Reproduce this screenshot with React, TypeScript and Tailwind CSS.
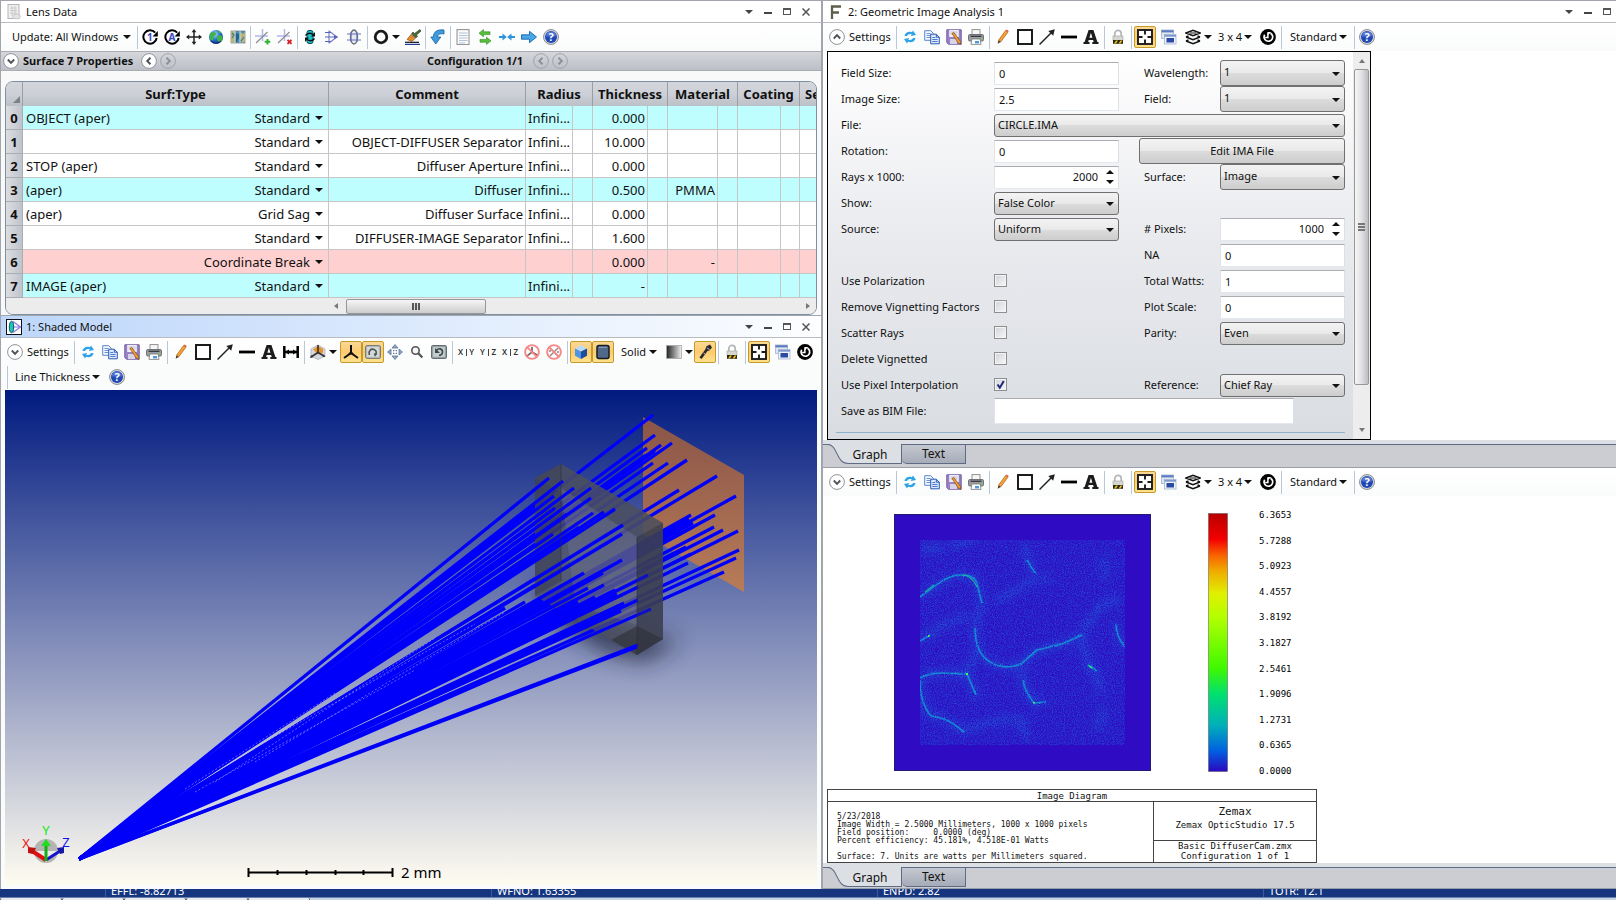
import React, { ReactNode } from "react";

/* ---------- small shared pieces ---------- */

function DropArrow({ className = "" }: { className?: string }) {
  return (
    <svg viewBox="0 0 8 4" className={`h-[4px] w-[8px] shrink-0 ${className}`} aria-hidden="true">
      <path d="M0 0h8L4 4z" fill="#111" />
    </svg>
  );
}

function Sep({ tight = false }: { tight?: boolean }) {
  return <span className={`${tight ? "mx-px" : "mx-[2px]"} h-[23px] w-px shrink-0 bg-[#b9c7d8]`} />;
}

function Tool({ label, active = false, children }: { label: string; active?: boolean; children: ReactNode }) {
  const base = "flex h-[22px] w-[22px] shrink-0 items-center justify-center";
  return (
    <button
      type="button"
      aria-label={label}
      className={
        active
          ? `${base} rounded-[2px] border border-[#c29b29] bg-gradient-to-b from-[#fbd896] via-[#fdcb70] to-[#fee08c]`
          : base
      }
    >
      {children}
    </button>
  );
}

function MenuButton({ children, className = "" }: { children: ReactNode; className?: string }) {
  return (
    <button
      type="button"
      aria-haspopup="menu"
      className={`flex h-[22px] shrink-0 items-center justify-between whitespace-nowrap ${className}`}
    >
      <span>{children}</span>
      <DropArrow className="w-[6px]" />
    </button>
  );
}

function Svg({ size = 16, children }: { size?: number; children: ReactNode }) {
  return (
    <svg viewBox="0 0 16 16" width={size} height={size} className="shrink-0" aria-hidden="true">
      {children}
    </svg>
  );
}

/* ---------- icons ---------- */

const CircleArrow = ({ letter }: { letter: string }) => (
  <Svg>
    <path d="M13.2 3.6A6.7 6.7 0 1 0 14.7 9" fill="none" stroke="#000" strokeWidth="2" />
    <path d="M15.8 2v5.4h-5.2z" fill="#000" />
    <text x="7.9" y="11.6" fontSize="10" fontWeight="700" textAnchor="middle" fill="#3a48c0" fontFamily="Noto Sans, sans-serif">
      {letter}
    </text>
  </Svg>
);
const MoveCross = () => (
  <Svg>
    <path d="M8 2v12M2 8h12" stroke="#222" strokeWidth="1.500" />
    <path d="M8 0l2.400 3.200H5.600zM8 16l2.400-3.200H5.600zM0 8l3.200-2.400v4.800zM16 8l-3.200-2.400v4.800z" fill="#222" />
  </Svg>
);
const Globe = () => (
  <Svg>
    <defs>
      <radialGradient id="globe" cx="0.4" cy="0.3" r="0.8">
        <stop offset="0" stopColor="#bfe0ff" />
        <stop offset="0.45" stopColor="#2b78d8" />
        <stop offset="1" stopColor="#0b2a7c" />
      </radialGradient>
    </defs>
    <circle cx="8" cy="8" r="7" fill="url(#globe)" />
    <path d="M2.500 4.500C5 1.800 8 3 8 5S5 7 5.500 9 4 12 3 11.500 1 6.500 2.500 4.500zM9.500 7c2-1.500 4-1 5 1s-1 5-3 5-3.500-4.500-2-6zM9 1.500c2 0 3.500 1.200 4.200 2.500L11 4z" fill="#3db34a" />
    <path d="M3 12c3 2.500 7 2.500 10 0" stroke="#0a1f50" strokeWidth="1.200" fill="none" opacity=".6" />
  </Svg>
);
const MapIcon = () => (
  <Svg>
    <rect x="1" y="2" width="14" height="12" fill="#4f93b5" stroke="#6a7a80" strokeWidth=".7" />
    <path d="M1 2h4v12H1zM10 3l3 2 2-2v10l-3 1-2-4z" fill="#b9b27a" />
    <path d="M6 4l3 1v4l-2 4H6z" fill="#22648f" />
    <path d="M5 2v12M10 2v12" stroke="#dfe7e2" strokeWidth=".8" />
    <path d="M2 4l2 2-2 3M11 12l3-4" stroke="#3f7a8c" strokeWidth="1.200" fill="none" />
  </Svg>
);
const AxisEdit = ({ add }: { add: boolean }) => (
  <Svg>
    <path d="M7.500 0v12M0 7h13" stroke="#b4b6ee" strokeWidth="1.500" />
    <path d="M1 14L12.500 3" stroke="#8a8a8a" strokeWidth="1.100" />
    {add ? (
      <path d="M12.500 10v5.600M9.700 12.800h5.600" stroke="#2fb335" strokeWidth="2" />
    ) : (
      <path d="M10.500 10.800l4 4M14.500 10.800l-4 4" stroke="#d42020" strokeWidth="1.900" />
    )}
  </Svg>
);
const LensTeal = () => (
  <Svg>
    <rect x="5" y="1.500" width="6" height="13" rx="2" fill="#18c2c9" stroke="#0a4a50" />
    <path d="M3.500 6.500c2-2.500 5-2.800 7.500-1M12.500 9.500c-2 2.500-5 2.800-7.500 1" fill="none" stroke="#111" strokeWidth="1.500" />
    <path d="M13 3v4.500H9zM3 13V8.500h4z" fill="#111" />
  </Svg>
);
const LensRay = () => (
  <Svg>
    <path d="M5 1.500v13M5 2l8 6-8 6" fill="none" stroke="#7a83c8" strokeWidth="1.200" />
    <path d="M1 3.500h6M1 12.500h6M1 8h12" stroke="#5662b8" strokeWidth="1.200" />
    <path d="M14 8l-4-2v4z" fill="#5662b8" />
  </Svg>
);
const LensFrame = () => (
  <Svg>
    <ellipse cx="8" cy="8" rx="3.500" ry="7" fill="#e8eaf2" stroke="#6b7078" strokeWidth="1.400" />
    <path d="M1 5h14M1 11h14M5 3v10M11 3v10" stroke="#6570b4" strokeWidth="1" />
  </Svg>
);
const Ring = () => (
  <Svg>
    <circle cx="8" cy="8" r="5.800" fill="none" stroke="#1a1a1a" strokeWidth="2.800" />
  </Svg>
);
const Brush = () => (
  <Svg>
    <path d="M15 .5L9.500 4.500 8 3 6.500 5l4 4 2-1.500L11.500 6 16 2z" fill="#4d6b3a" stroke="#24361a" strokeWidth=".6" />
    <path d="M6 5.500l4 4L7 12.500l-5-2z" fill="#e88b2a" stroke="#7c3d0b" strokeWidth=".6" />
    <path d="M0 13.300h14" stroke="#111" strokeWidth="1.200" />
    <path d="M0 15.400h15" stroke="#1d3a9c" strokeWidth="1.200" />
  </Svg>
);
const Undo = () => (
  <Svg>
    <path d="M14 1C7 0 3.500 3 3.300 8H.8l5 7 5-7H7.500C7.600 5.500 10 4.300 14 5z" fill="#3c9bdc" stroke="#1c5fa0" strokeWidth=".8" />
  </Svg>
);
const ListIcon = () => (
  <Svg>
    <rect x="2" y=".6" width="12" height="15" fill="#fafafa" stroke="#8c8c8c" />
    <path d="M4 4h8.500M4 6.500h8.500M4 9h8.500M4 11.500h8.500M4 14h6" stroke="#a9bcd8" strokeWidth=".9" />
  </Svg>
);
const Swap = () => (
  <Svg>
    <path d="M2 4.200L6.500.6v2.200H13v2.800H6.500v2.200zM14 11.800L9.500 8.200v2.200H3v2.800h6.500v2.200z" fill="#56bf3c" stroke="#2f8a20" strokeWidth=".6" />
  </Svg>
);
const Inward = () => (
  <Svg>
    <path d="M0 7h3.500V4.500L7.800 8l-4.300 3.500V9H0zM16 7h-3.500V4.500L8.200 8l4.300 3.500V9H16z" fill="#2f93dc" />
  </Svg>
);
const ArrowRight = () => (
  <Svg>
    <path d="M.5 5.800h8V2.300L15.500 8l-7 5.700v-3.500h-8z" fill="#49a7e8" stroke="#1766b0" strokeWidth=".9" />
  </Svg>
);
const Help = () => (
  <Svg>
    <circle cx="8" cy="8" r="7.500" fill="#d4d6da" stroke="#84878c" strokeWidth=".9" />
    <circle cx="8" cy="8" r="6" fill="#1f48b4" />
    <path d="M2.600 7a5.500 5.500 0 0 1 10.800 0c-3 1.200-8 1.200-10.800 0z" fill="#5e83de" opacity=".7" />
    <text x="8" y="12" fontSize="11" fontWeight="700" textAnchor="middle" fill="#fff" fontFamily="Noto Sans, sans-serif">
      ?
    </text>
  </Svg>
);
const Refresh = () => (
  <Svg>
    <path d="M2.500 7C3 3.500 6.500 1.800 10 3.200L11 1.500 14 6l-5.300.9 1-1.700C7.500 4.500 5.500 5.500 5 7zM13.500 9c-.5 3.500-4 5.200-7.500 3.800L5 14.500 2 10l5.300-.9-1 1.700c2.200.7 4.200-.3 4.700-1.800z" fill="#2ea3e6" />
  </Svg>
);
const Copy = () => (
  <Svg>
    <path d="M.7 1.700h6l2.600 2.600v7H.7z" fill="#f4f8ff" stroke="#5a86cf" />
    <path d="M2.500 4.500h4M2.500 6.500h5M2.500 8.500h5" stroke="#5a86cf" strokeWidth=".9" />
    <path d="M6.700 5.200h5.600l3 3v6.600H6.700z" fill="#dfeafc" stroke="#2a5bb4" />
    <path d="M12.300 5.200v3h3" fill="none" stroke="#2a5bb4" />
    <path d="M8.300 8.500h3M8.300 10.500h5.300M8.300 12.500h5.300" stroke="#3c6cc2" strokeWidth=".9" />
  </Svg>
);
const Save = () => (
  <Svg>
    <path d="M.8.8h14.400v14.400H2.500L.8 13.500z" fill="#9a82c6" stroke="#6f5ba0" />
    <rect x="3.200" y="1" width="9.600" height="7" fill="#f1eff6" />
    <path d="M4.500 3h7M4.500 5h7" stroke="#b5b0c4" strokeWidth=".8" />
    <rect x="4" y="10" width="7" height="5" fill="#d8d3e6" />
    <path d="M6 4.500l1.800-1 6.700 9 .3 3-2.600-1.600z" fill="#f0a030" stroke="#7d4a10" strokeWidth=".7" />
  </Svg>
);
const Print = () => (
  <Svg>
    <rect x="4" y=".6" width="8" height="6" fill="#f7f7f7" stroke="#888" strokeWidth=".9" />
    <rect x=".5" y="5.500" width="15" height="6.500" rx="1.300" fill="#9a9da2" stroke="#66696d" strokeWidth=".9" />
    <path d="M2.500 7.300h11" stroke="#3a3c40" strokeWidth="1.400" />
    <path d="M3.800 10h8.400l.8 5.400H3z" fill="#fff" stroke="#777" strokeWidth=".8" />
    <rect x="7" y="12" width="4" height="2.400" fill="#4b9bdc" />
    <circle cx="13.500" cy="9.800" r=".8" fill="#5ce04a" />
  </Svg>
);
const Pencil = () => (
  <Svg>
    <path d="M3.500 11.300L10.600 1.500l2.300 1.700-7.200 9.700z" fill="#f6a23c" stroke="#b06a1a" strokeWidth=".8" />
    <path d="M10.600 1.500l1-1.100 2.200 1.700-.9 1.100z" fill="#e25a4a" />
    <path d="M3.500 11.300l-.9 3.500 3.100-1.900z" fill="#4a3420" />
  </Svg>
);
const RectIcon = () => (
  <Svg>
    <rect x="1" y="1" width="14" height="14" fill="#fff" stroke="#111" strokeWidth="1.900" />
  </Svg>
);
const ArrowDiag = () => (
  <Svg>
    <path d="M.5 15.500L12 4" stroke="#222" strokeWidth="1.500" />
    <path d="M15.800.3l-1.600 6.500-4.900-4.900z" fill="#222" />
  </Svg>
);
const LineIcon = () => (
  <Svg>
    <path d="M0 8h16" stroke="#000" strokeWidth="2.800" />
  </Svg>
);
const LetterA = () => (
  <Svg>
    <path d="M5.600 1h4.800l4 12H15.500v2H9.300v-2h1.400l-.6-2H5.700l-.6 2h1.400v2H.5v-2h1.100zM6.400 8.800h3L7.900 3.800z" fill="#1c1c1c" fillRule="evenodd" />
  </Svg>
);
const Dimension = () => (
  <Svg>
    <path d="M1.300 2v12M14.700 2v12" stroke="#000" strokeWidth="2.500" />
    <path d="M1 8h14" stroke="#000" strokeWidth="2.600" />
    <path d="M2 8l4-2.500v5zM14 8l-4-2.500v5z" fill="#000" />
  </Svg>
);
const Orient = () => (
  <Svg>
    <path d="M1 5l7-4 7 4v7l-7 3.500L1 12z" fill="#d5d8de" stroke="#a4a9b1" strokeWidth=".7" />
    <path d="M3 5.500L8 2l5 3v3.500l-5 2z" fill="#e8922c" />
    <path d="M8 1v7.500M8 8.500L1 13M8 8.500l6 3.500" stroke="#333" strokeWidth="1.600" />
    <path d="M0 14l1-3 2 2.300zM15.500 13l-3-.3 1.300-2.300z" fill="#333" />
  </Svg>
);
const Triad = () => (
  <Svg>
    <path d="M8 1v8L1 14M8 9l7 5" stroke="#111" strokeWidth="2" fill="none" />
    <path d="M8 6.500l3 4H5z" fill="#111" />
  </Svg>
);
const RotateView = () => (
  <Svg>
    <rect x=".6" y="1.600" width="14.800" height="12.800" rx="1.500" fill="#b9bfc0" stroke="#6e7676" />
    <rect x="2.200" y="3.200" width="11.600" height="9.600" fill="#d6dad8" />
    <path d="M4.500 11C3 7 6 4.300 9 5.500s2.500 3.500 1.500 5" fill="none" stroke="#4c5656" strokeWidth="1.600" />
    <path d="M8.500 9.500h4L10 12.800z" fill="#4c5656" />
  </Svg>
);
const UndoView = () => (
  <Svg>
    <rect x=".6" y="1.600" width="14.800" height="12.800" rx="1" fill="#9ba6a8" stroke="#586466" />
    <rect x="2.200" y="3.200" width="11.600" height="9.600" fill="#c6ced0" />
    <path d="M5 7c2-3.500 6.500-2.500 6.500.8 0 2-1.500 3.500-3.500 3.700" fill="none" stroke="#3c484a" strokeWidth="1.600" />
    <path d="M4 4v5h5z" fill="#3c484a" />
  </Svg>
);
const Pan = () => (
  <Svg>
    <path d="M8 .5l3 3.500H5zM8 15.500l3-3.500H5zM.5 8L4 5v6zM15.500 8L12 5v6z" fill="#8fa5c4" stroke="#5e7596" strokeWidth=".8" />
    <path d="M6 6h1.300v1.300H6zM8.700 6H10v1.300H8.700zM6 8.700h1.300V10H6zM8.700 8.700H10V10H8.700z" fill="#5e7596" />
  </Svg>
);
const Magnifier = () => (
  <Svg>
    <circle cx="6.500" cy="6.500" r="3.700" fill="#f4f6f8" stroke="#555" strokeWidth="1.600" />
    <path d="M9.300 9.300l4 4.200" stroke="#555" strokeWidth="2.300" />
  </Svg>
);
const NoEntry = ({ slash = false }: { slash?: boolean }) => (
  <Svg>
    {slash ? (
      <path d="M4 4l3 3M12 4l-4 4-4 4M9 9l3 3M3 7h2M11 8h2" stroke="#9a8080" strokeWidth="1.400" />
    ) : (
      <path d="M8 3v5L3 12M8 8l5 3" stroke="#6d5656" strokeWidth="1.600" fill="none" />
    )}
    <circle cx="8" cy="8" r="6.900" fill="none" stroke="#f58888" strokeWidth="1.900" />
    <path d="M3.200 3.200l9.600 9.600" stroke="#f58888" strokeWidth="1.900" />
  </Svg>
);
const Cube = () => (
  <Svg>
    <path d="M2 4.500L8 1.300l6 3.200-6 3z" fill="#b9dafa" />
    <path d="M2 4.500l6 3v7.400l-6-3.200z" fill="#4f95e6" />
    <path d="M14 4.500l-6 3v7.400l6-3.200z" fill="#1d4c9e" />
  </Svg>
);
const Cylinder = () => (
  <Svg>
    <rect x="2" y="1.500" width="12" height="13" rx="2" fill="#50688a" stroke="#141c26" strokeWidth="1.500" />
    <path d="M4 3.300h8" stroke="#8fa4c0" strokeWidth="1" />
  </Svg>
);
const GradientIcon = () => (
  <Svg>
    <defs>
      <linearGradient id="shade">
        <stop offset="0" stopColor="#222" />
        <stop offset="1" stopColor="#f0f0f0" />
      </linearGradient>
    </defs>
    <rect x=".5" y="1.500" width="15" height="13" fill="url(#shade)" stroke="#a8a8a8" strokeWidth=".8" />
  </Svg>
);
const Torch = () => (
  <Svg>
    <path d="M9.500 2.200L13 .5l2 3-2.500 3-2 .6L4.600 15l-2.200-1.600 6-8.200z" fill="#2a2a2a" />
    <path d="M10 3.800l2.800 2M6.500 9l1.500 1" stroke="#bbb" strokeWidth="1" />
  </Svg>
);
const Lock = () => (
  <Svg>
    <path d="M4.800 8V4.500a3.200 3.200 0 0 1 6.400 0V8" fill="none" stroke="#b4b6ba" strokeWidth="1.700" />
    <rect x="3" y="7" width="10" height="4.500" fill="#d6d6d2" stroke="#a2a29c" strokeWidth=".6" />
    <rect x="3" y="11" width="10" height="3.800" fill="#2a2614" />
    <path d="M4 14.500l2-3h2l-2 3zM8.500 14.500l2-3h2l-2 3z" fill="#e8c020" />
  </Svg>
);
const Target = () => (
  <Svg>
    <rect x="1" y="1" width="14" height="14" fill="#fff" stroke="#1c1c1c" strokeWidth="1.900" />
    <path d="M8 1v4.500M8 10.500V15M1 8h4.500M10.500 8H15" stroke="#1c1c1c" strokeWidth="1.900" />
  </Svg>
);
const Windows = () => (
  <Svg>
    <rect x=".5" y="1" width="12" height="8.500" fill="#dfe6f2" stroke="#a3b4d2" strokeWidth=".8" />
    <path d="M.5 2.300h12" stroke="#5b7cc0" strokeWidth="2.200" />
    <rect x="3.500" y="5.500" width="11.500" height="9.500" fill="#f0f3f8" stroke="#a3b4d2" strokeWidth=".8" />
    <path d="M3.500 6.800h11.500" stroke="#7d98ce" strokeWidth="1.800" />
    <rect x="5.500" y="9" width="7.500" height="4.500" fill="#2b4aa4" />
  </Svg>
);
const Layers = () => (
  <Svg>
    <path d="M1 4l7-2.800L15 4 8 6.800zM1 8l2.500-1M15 8l-2.500-1M1 8l7 2.800L15 8M1 12l2.500-1M15 12l-2.500-1M1 12l7 2.800L15 12" fill="none" stroke="#111" strokeWidth="1.500" />
    <path d="M5 4h6" stroke="#111" strokeWidth="1" />
  </Svg>
);
const Reset = () => (
  <Svg>
    <circle cx="8" cy="8" r="7.900" fill="#000" />
    <path d="M4.700 5.700A4.300 4.300 0 1 0 10.500 4.200" fill="none" stroke="#fff" strokeWidth="1.700" />
    <path d="M7.900 3.200v5.200H5.200" fill="none" stroke="#fff" strokeWidth="1.500" />
    <path d="M8 3h3.500L8 6z" fill="#fff" />
  </Svg>
);
const AxisPair = ({ a, b }: { a: string; b: string }) => (
  <span className="flex w-[16px] items-center justify-between text-[8px] leading-none font-semibold text-[#333]">
    {a}
    <span className="h-[7px] w-px bg-[#444]" />
    {b}
  </span>
);

function Chevron({ dir, muted = false, label }: { dir: "up" | "down" | "left" | "right"; muted?: boolean; label: string }) {
  const paths = {
    down: "M4.800 6.500L8 9.800l3.200-3.300",
    up: "M4.800 9.500L8 6.200l3.200 3.300",
    left: "M9.500 4.800L6.200 8l3.300 3.200",
    right: "M6.500 4.800L9.800 8l-3.300 3.200",
  };
  return (
    <button type="button" aria-label={label} className="flex h-[16px] w-[16px] shrink-0 items-center justify-center">
      <Svg>
        <circle cx="8" cy="8" r="7.400" fill={muted ? "none" : "#fff"} stroke={muted ? "#a0a3a8" : "#909398"} strokeWidth="1" />
        <path d={paths[dir]} fill="none" stroke={muted ? "#8d9095" : "#505357"} strokeWidth="1.900" />
      </Svg>
    </button>
  );
}

/* ---------- window chrome ---------- */

function WindowControls({ closable = true }: { closable?: boolean }) {
  const cell = "flex h-[19px] w-[19px] items-center justify-center";
  return (
    <div className="flex shrink-0">
      <button type="button" aria-label="Options" className={cell}>
        <svg viewBox="0 0 8 4" width="8" height="4"><path d="M0 0h8L4 4z" fill="#444" /></svg>
      </button>
      <button type="button" aria-label="Minimize" className={cell}>
        <span className="mt-[2px] h-[2px] w-[8px] bg-[#444]" />
      </button>
      <button type="button" aria-label="Maximize" className={cell}>
        <span className="h-[7px] w-[8px] border border-t-2 border-[#555]" />
      </button>
      {closable && (
        <button type="button" aria-label="Close" className={cell}>
          <svg viewBox="0 0 8 8" width="8" height="8"><path d="M.5.5l7 7M7.500.5l-7 7" stroke="#555" strokeWidth="1.500" /></svg>
        </button>
      )}
    </div>
  );
}

function TitleBar({ icon, title, tone = "plain", closable }: { icon: ReactNode; title: string; tone?: "plain" | "active"; closable?: boolean }) {
  const bg = tone === "active" ? "bg-gradient-to-r from-[#bcd6fa] to-[#fdfeff]" : "bg-white";
  return (
    <header className={`flex h-[22px] shrink-0 items-center border-b border-[#b8bbc0] pl-[5px] ${closable === false ? "" : "pr-[6px]"} ${bg}`}>
      {icon}
      <h2 className="flex-1 pl-[4px]">{title}</h2>
      <WindowControls closable={closable} />
    </header>
  );
}

const barClass = "flex items-center bg-gradient-to-b from-white to-[#fafbfb]";

/* ---------- lens data ---------- */

type Row = { label: string; type: string; comment: string; radius: string; thick: string; material: string; tone: string };

const rows: Row[] = [
  { label: "OBJECT (aper)", type: "Standard", comment: "", radius: "Infini...", thick: "0.000", material: "", tone: "bg-[#bffeff]" },
  { label: "", type: "Standard", comment: "OBJECT-DIFFUSER Separator", radius: "Infini...", thick: "10.000", material: "", tone: "bg-white" },
  { label: "STOP (aper)", type: "Standard", comment: "Diffuser Aperture", radius: "Infini...", thick: "0.000", material: "", tone: "bg-white" },
  { label: "(aper)", type: "Standard", comment: "Diffuser", radius: "Infini...", thick: "0.500", material: "PMMA", tone: "bg-[#bffeff]" },
  { label: "(aper)", type: "Grid Sag", comment: "Diffuser Surface", radius: "Infini...", thick: "0.000", material: "", tone: "bg-white" },
  { label: "", type: "Standard", comment: "DIFFUSER-IMAGE Separator", radius: "Infini...", thick: "1.600", material: "", tone: "bg-white" },
  { label: "", type: "Coordinate Break", comment: "", radius: "", thick: "0.000", material: "-", tone: "bg-[#ffd0d0]" },
  { label: "IMAGE (aper)", type: "Standard", comment: "", radius: "Infini...", thick: "-", material: "", tone: "bg-[#bffeff]" },
];

function LensTable() {
  const th = "h-[24px] border-r border-[#9a9ea5] p-0 text-center text-[13px] font-bold whitespace-nowrap";
  const td = "h-[24px] border-r border-b border-[#c6c6c6] p-0 whitespace-nowrap";
  return (
    <div className="mx-[4px] mt-[10px] overflow-hidden rounded-[8px] border border-[#7c8fa3] bg-[#ededed]">
      <table className="w-full table-fixed border-separate border-spacing-0 text-[13px] leading-[20px]">
        <colgroup>
          <col className="w-[17px]" /><col className="w-[306px]" /><col className="w-[197px]" />
          <col className="w-[47px]" /><col className="w-[20px]" /><col className="w-[55px]" /><col className="w-[20px]" />
          <col className="w-[50px]" /><col className="w-[20px]" /><col className="w-[43px]" /><col className="w-[19px]" /><col />
        </colgroup>
        <thead>
          <tr className="bg-gradient-to-b from-[#d3d6db] via-[#cdd0d6] to-[#bcc0c7]">
            <th className={th} aria-label="Row">
              <svg viewBox="0 0 7 7" className="mt-[10px] ml-[7px] h-[7px] w-[7px]"><path d="M7 0v7H0z" fill="#7e8288" /></svg>
            </th>
            <th className={th}>Surf:Type</th>
            <th className={th}>Comment</th>
            <th className={th} colSpan={2}>Radius</th>
            <th className={th} colSpan={2}>Thickness</th>
            <th className={th} colSpan={2}>Material</th>
            <th className={th} colSpan={2}>Coating</th>
            <th className="h-[24px] overflow-hidden p-0 pl-[5px] text-left font-bold">Se</th>
          </tr>
        </thead>
        <tbody>
          {rows.map((r, i) => (
            <tr key={i} className={r.tone}>
              <th scope="row" className="h-[24px] border-r border-b border-[#a9adb4] bg-gradient-to-r from-[#dcdee2] to-[#bfc3ca] p-0 text-center font-bold">{i}</th>
              <td className={td}>
                <div className="flex items-center justify-between pr-[5px] pl-[3px]">
                  <span>{r.label}</span>
                  <span className="flex items-center">
                    <select aria-label={`Surface ${i} type`} defaultValue={r.type} className="w-[130px] appearance-none bg-transparent pr-[5px] [text-align-last:right] outline-none">
                      <option>{r.type}</option>
                    </select>
                    <DropArrow />
                  </span>
                </div>
              </td>
              <td className={`${td} pr-[2px] text-right`}>{r.comment}</td>
              <td className={`${td} pl-[2px]`}>{r.radius}</td>
              <td className={td} />
              <td className={`${td} pr-[2px] text-right`}>{r.thick}</td>
              <td className={td} />
              <td className={`${td} pr-[2px] text-right`}>{r.material}</td>
              <td className={td} />
              <td className={td} />
              <td className={td} />
              <td className="border-b border-[#c6c6c6]" />
            </tr>
          ))}
        </tbody>
      </table>
      <div className="flex h-[16px] items-center bg-[#ececec] pr-[6px] pl-[328px]">
        <svg viewBox="0 0 4 6" width="4" height="6"><path d="M4 0v6L0 3z" fill="#777" /></svg>
        <div className="ml-[8px] flex h-[15px] w-[140px] items-center justify-center gap-px rounded-[2px] border border-[#979797] bg-gradient-to-b from-[#f6f6f6] to-[#cdcdcd]">
          <span className="h-[7px] w-[2px] bg-[#555]" /><span className="h-[7px] w-[2px] bg-[#555]" /><span className="h-[7px] w-[2px] bg-[#555]" />
        </div>
        <svg viewBox="0 0 4 6" width="4" height="6" className="ml-auto"><path d="M0 0v6l4-3z" fill="#777" /></svg>
      </div>
    </div>
  );
}

function LensData() {
  return (
    <section className="flex shrink-0 flex-col border-b border-[#a2a5ab] bg-[#f9f9fa]">
      <TitleBar
        title="Lens Data"
        icon={
          <svg viewBox="0 0 16 16" width="16" height="16">
            <rect x="2" y=".5" width="11" height="14" fill="#f0f0f0" stroke="#b6b6b6" />
            <path d="M4 4h7M4 6.500h7M4 9h7M6 2v10M9 2v10" stroke="#c4c4c4" strokeWidth=".8" />
            <ellipse cx="10.500" cy="12.500" rx="4" ry="2.500" fill="#e2e2e2" stroke="#bbb" strokeWidth=".6" />
          </svg>
        }
      />
      <div role="toolbar" aria-label="Lens data tools" className={`${barClass} h-[28px] pl-[11px]`}>
        <MenuButton className="mr-[5px] w-[119px]">Update: All Windows</MenuButton>
        <Sep tight />
        <Tool label="Update one"><CircleArrow letter="1" /></Tool>
        <Tool label="Update all"><CircleArrow letter="A" /></Tool>
        <Tool label="Move"><MoveCross /></Tool>
        <Tool label="World"><Globe /></Tool>
        <Tool label="Map"><MapIcon /></Tool>
        <Sep tight />
        <Tool label="Add tilt"><AxisEdit add /></Tool>
        <Tool label="Remove tilt"><AxisEdit add={false} /></Tool>
        <Sep tight />
        <Tool label="Reverse element"><LensTeal /></Tool>
        <Tool label="Ray aiming"><LensRay /></Tool>
        <Tool label="Aperture frame"><LensFrame /></Tool>
        <Sep />
        <Tool label="Aperture"><Ring /></Tool>
        <DropArrow className="mr-[2px] w-[6px]" />
        <Tool label="Paint"><Brush /></Tool>
        <Sep tight />
        <Tool label="Undo"><Undo /></Tool>
        <Sep tight />
        <Tool label="List"><ListIcon /></Tool>
        <Tool label="Swap"><Swap /></Tool>
        <Tool label="Fit columns"><Inward /></Tool>
        <Tool label="Go to"><ArrowRight /></Tool>
        <Tool label="Help"><Help /></Tool>
      </div>
      <div className="flex h-[20px] items-center border-y border-[#a9adb3] bg-gradient-to-b from-[#d5d7dc] to-[#bcbfc6] pl-[2px] font-bold">
        <Chevron dir="down" label="Expand properties" />
        <span className="w-[122px] pl-[4px] whitespace-nowrap">Surface 7 Properties</span>
        <Chevron dir="left" label="Previous surface" />
        <span className="w-[3px]" />
        <Chevron dir="right" muted label="Next surface" />
        <span className="ml-[251px] w-[106px] whitespace-nowrap">Configuration 1/1</span>
        <Chevron dir="left" muted label="Previous configuration" />
        <span className="w-[3px]" />
        <Chevron dir="right" muted label="Next configuration" />
      </div>
      <LensTable />
    </section>
  );
}

/* ---------- shaded model ---------- */

const SOURCE = [74, 469];
const farRays = [
  [648, 25], [650, 45], [642, 58], [656, 55], [667, 53], [648, 73], [663, 73], [682, 70], [712, 86], [674, 100], [731, 106],
  [686, 125], [684, 129], [710, 125], [688, 133], [688, 137], [709, 137], [718, 140], [733, 141], [734, 160], [731, 168],
  [719, 182], [686, 164], [683, 173], [681, 157], [641, 65], [650, 61],
];
const nearRays = [
  [544, 88], [558, 91], [569, 98], [549, 106], [586, 98], [586, 108], [528, 118], [550, 118], [562, 124], [599, 122], [610, 119],
  [588, 123], [574, 137], [548, 144], [618, 135], [617, 144], [617, 170], [579, 183], [598, 183], [643, 185], [599, 195],
  [583, 198], [610, 200], [633, 197], [619, 213], [573, 212], [646, 219], [616, 221], [612, 204], [590, 207], [569, 219],
  [633, 210], [633, 255], [632, 257], [520, 212], [500, 218], [470, 236], [420, 262], [380, 290], [350, 282], [330, 320],
];

function RayBundle({ ends }: { ends: number[][] }) {
  return (
    <g stroke="#0000fa" strokeWidth="3.300">
      {ends.map(([x, y], i) => (
        <path key={i} d={`M${SOURCE[0]} ${SOURCE[1]}L${x} ${y}`} />
      ))}
    </g>
  );
}

function ModelView() {
  return (
    <svg viewBox="0 0 812 495" preserveAspectRatio="xMidYMid slice" className="block h-full w-full" role="img" aria-label="Shaded model of the lens system">
      <defs>
        <linearGradient id="sky" x2="0" y2="1">
          <stop offset="0" stopColor="#001a80" />
          <stop offset="1" stopColor="#fffcf0" />
        </linearGradient>
        <linearGradient id="plate" x2="0" y2="1">
          <stop offset="0" stopColor="#8a5548" />
          <stop offset="1" stopColor="#b87c58" />
        </linearGradient>
        <filter id="soft" x="-40%" y="-60%" width="180%" height="220%"><feGaussianBlur stdDeviation="11" /></filter>
      </defs>
      <rect width="812" height="495" fill="url(#sky)" />
      <path d="M530 190L625 240L675 250L640 272L600 262L540 225z" fill="#20263c" opacity=".75" filter="url(#soft)" />
      <path d="M638 27L739 85V202L638 144z" fill="url(#plate)" />
      <RayBundle ends={farRays} />
      <path d="M530 88L556 74L658 133V249L632 265L530 206z" fill="#4f5360" opacity=".7" />
      <path d="M530 88L556 74V191L530 206z" fill="#2e3246" opacity=".4" />
      <path d="M556 74L658 133L632 147L530 88z" fill="#484c5c" opacity=".5" />
      <path d="M556 98L632 147V235L570 215z" fill="#8488a8" opacity=".25" />
      <path d="M632 147L658 133V249L632 265z" fill="#34374a" opacity=".5" />
      <path d="M632 236L658 249L632 265L606 250z" fill="#2a2b30" opacity=".55" />
      <RayBundle ends={nearRays} />
      <path d="M632 147L658 133V249L632 265z" fill="#34374a" opacity=".3" />
      <path d="M632 147V265M556 74V191" stroke="#2b2e3c" strokeWidth="1" opacity=".6" />
      <g stroke="#c8ccff" strokeWidth=".6" strokeDasharray="2 2" opacity=".8">
        <path d="M180 399L330 303M190 402L410 280M210 392L430 248M250 372L500 222M260 352L470 234" />
      </g>
      <circle cx="41" cy="461" r="12" fill="#b4b4b4" />
      <path d="M29 461h24L41 472z" fill="#ececec" />
      <path d="M41 470L27 461" stroke="#e01010" strokeWidth="4" />
      <path d="M41 470L55 461" stroke="#1414c8" strokeWidth="3" />
      <path d="M41 471V454" stroke="#12b012" strokeWidth="3" />
      <path d="M41 449l5 7h-10z" fill="#1ede1e" />
      <path d="M23 457l8 1-3 6-5-1z" fill="#c01010" />
      <path d="M59 457l-7 1 3 6 4-1z" fill="#1818a8" />
      <g fontFamily="Noto Sans, sans-serif" fontSize="13" textAnchor="middle">
        <text x="21" y="458" fill="#f01010">X</text>
        <text x="41" y="445" fill="#10e810">Y</text>
        <text x="61" y="457" fill="#1010f0">Z</text>
      </g>
      <path d="M243.500 482.500h144M243.500 478v9M387.500 478v9M272.500 480v5M301.500 480v5M330.500 480v5M358.500 480v5" stroke="#000" strokeWidth="2" />
      <text x="396" y="488" fontFamily="Noto Sans, sans-serif" fontSize="15" fill="#000">2 mm</text>
    </svg>
  );
}

function ShadedModel() {
  return (
    <section className="flex min-h-0 flex-1 flex-col bg-[#fafbfb]">
      <TitleBar
        tone="active"
        title="1: Shaded Model"
        icon={
          <svg viewBox="0 0 16 16" width="16" height="16">
            <rect x=".5" y=".5" width="15" height="15" fill="#fff" stroke="#111" />
            <path d="M7 2.500L14.500 8 7 13.500M4 8h11" fill="none" stroke="#8878e0" strokeWidth="1.200" />
            <ellipse cx="5.500" cy="8" rx="2.200" ry="5.800" fill="#1fc4c0" stroke="#0b5a5c" />
          </svg>
        }
      />
      <div role="toolbar" aria-label="Shaded model tools" className={`${barClass} h-[28px] shrink-0 pl-[6px]`}>
        <Chevron dir="down" label="Show settings" />
        <button type="button" className="w-[49px] pl-[4px] text-left">Settings</button>
        <Sep />
        <Tool label="Refresh"><Refresh /></Tool>
        <Tool label="Copy"><Copy /></Tool>
        <Tool label="Save"><Save /></Tool>
        <Tool label="Print"><Print /></Tool>
        <Sep />
        <Tool label="Pencil"><Pencil /></Tool>
        <Tool label="Rectangle"><RectIcon /></Tool>
        <Tool label="Arrow"><ArrowDiag /></Tool>
        <Tool label="Line"><LineIcon /></Tool>
        <Tool label="Text"><LetterA /></Tool>
        <Tool label="Dimension"><Dimension /></Tool>
        <Sep />
        <Tool label="Orientation"><Orient /></Tool>
        <DropArrow className="mr-[3px] w-[6px]" />
        <Tool label="Axes" active><Triad /></Tool>
        <Tool label="Rotate" active><RotateView /></Tool>
        <Tool label="Pan"><Pan /></Tool>
        <Tool label="Zoom"><Magnifier /></Tool>
        <Tool label="Reset view"><UndoView /></Tool>
        <Sep />
        <Tool label="XY view"><AxisPair a="X" b="Y" /></Tool>
        <Tool label="YZ view"><AxisPair a="Y" b="Z" /></Tool>
        <Tool label="XZ view"><AxisPair a="X" b="Z" /></Tool>
        <Tool label="Hide axes"><NoEntry /></Tool>
        <Tool label="Hide rays"><NoEntry slash /></Tool>
        <Sep />
        <Tool label="Shaded cube" active><Cube /></Tool>
        <Tool label="Edges" active><Cylinder /></Tool>
        <MenuButton className="ml-[7px] w-[36px]">Solid</MenuButton>
        <span className="w-[6px]" />
        <Tool label="Background"><GradientIcon /></Tool>
        <DropArrow className="mr-px w-[6px]" />
        <Tool label="Light" active><Torch /></Tool>
        <Sep />
        <Tool label="Lock"><Lock /></Tool>
        <Sep />
        <Tool label="Fit" active><Target /></Tool>
        <span className="w-[2px]" />
        <Tool label="Windows"><Windows /></Tool>
        <Tool label="Reset"><Reset /></Tool>
      </div>
      <div role="toolbar" aria-label="Line tools" className="flex h-[24px] shrink-0 items-start pl-[4px]">
        <Sep />
        <MenuButton className="mr-[6px] ml-[5px] w-[85px]">Line Thickness</MenuButton>
        <Tool label="Help"><Help /></Tool>
      </div>
      <div className="min-h-0 flex-1 px-[4px] pb-[4px]">
        <ModelView />
      </div>
    </section>
  );
}

/* ---------- image analysis ---------- */

function AnalysisToolbar({ open }: { open: boolean }) {
  return (
    <div role="toolbar" aria-label="Analysis tools" className={`${barClass} h-[28px] shrink-0 pl-[6px]`}>
      <Chevron dir={open ? "up" : "down"} label="Toggle settings" />
      <button type="button" className="w-[49px] pl-[4px] text-left">Settings</button>
      <Sep />
      <Tool label="Refresh"><Refresh /></Tool>
      <Tool label="Copy"><Copy /></Tool>
      <Tool label="Save"><Save /></Tool>
      <Tool label="Print"><Print /></Tool>
      <Sep />
      <Tool label="Pencil"><Pencil /></Tool>
      <Tool label="Rectangle"><RectIcon /></Tool>
      <Tool label="Arrow"><ArrowDiag /></Tool>
      <Tool label="Line"><LineIcon /></Tool>
      <Tool label="Text"><LetterA /></Tool>
      <Sep />
      <Tool label="Lock"><Lock /></Tool>
      <Sep />
      <Tool label="Fit" active><Target /></Tool>
      <span className="w-[2px]" />
      <Tool label="Windows"><Windows /></Tool>
      <span className="w-[2px]" />
      <Tool label="Layers"><Layers /></Tool>
      <DropArrow className="w-[6px]" />
      <MenuButton className="mr-[5px] ml-[6px] w-[34px]">3 x 4</MenuButton>
      <Tool label="Reset"><Reset /></Tool>
      <Sep />
      <MenuButton className="mr-[6px] ml-[6px] w-[57px]">Standard</MenuButton>
      <Sep tight />
      <Tool label="Help"><Help /></Tool>
    </div>
  );
}

function Lab({ id, col, row, children }: { id: string; col: "left" | "right"; row: string; children: ReactNode }) {
  return (
    <label htmlFor={id} className={`${col === "left" ? "col-start-1" : "col-start-4 pl-[5px]"} ${row} self-center whitespace-nowrap`}>
      {children}
    </label>
  );
}

function Box({ id, value, place, tall = false }: { id: string; value: string; place: string; tall?: boolean }) {
  return (
    <input
      id={id}
      type="text"
      defaultValue={value}
      className={`${place} ${tall ? "h-[26px]" : "h-[23px]"} w-full self-center border border-t-[#abadb3] border-r-[#dbdfe6] border-b-[#e3e9ef] border-l-[#e2e3ea] bg-white px-[4px] outline-none`}
    />
  );
}

function Pick({ id, value, place, tall = false }: { id: string; value: string; place: string; tall?: boolean }) {
  return (
    <div className={`${place} relative self-center`}>
      <select
        id={id}
        defaultValue={value}
        className={`${tall ? "h-[26px] pb-[3px]" : "h-[23px]"} block w-full appearance-none rounded-[3px] border border-[#707070] bg-[linear-gradient(#f3f3f3,#e9e9e9_50%,#dcdcdc_50%,#cdcdcd)] px-[3px] outline-none`}
      >
        <option>{value}</option>
      </select>
      <DropArrow className={`pointer-events-none absolute right-[5px] ${tall ? "top-[12px]" : "top-[10px]"}`} />
    </div>
  );
}

function Spinner({ id, value, place }: { id: string; value: string; place: string }) {
  return (
    <div className={`${place} flex h-[23px] items-center self-center border border-t-[#abadb3] border-r-[#dbdfe6] border-b-[#e3e9ef] border-l-[#e2e3ea] bg-white pr-[4px]`}>
      <input id={id} type="text" defaultValue={value} className="w-full min-w-0 bg-transparent pr-[8px] text-right outline-none" />
      <span className="flex flex-col gap-[6px]">
        <button type="button" aria-label="Increase" className="block leading-none">
          <svg viewBox="0 0 8 4" width="8" height="4" className="block"><path d="M0 4h8L4 0z" fill="#111" /></svg>
        </button>
        <button type="button" aria-label="Decrease" className="block leading-none">
          <svg viewBox="0 0 8 4" width="8" height="4" className="block"><path d="M0 0h8L4 4z" fill="#111" /></svg>
        </button>
      </span>
    </div>
  );
}

function Tick({ id, place, on = false }: { id: string; place: string; on?: boolean }) {
  return (
    <span className={`${place} relative mt-[6px] flex h-[13px] w-[13px]`}>
      <input
        id={id}
        type="checkbox"
        defaultChecked={on}
        className="peer h-[13px] w-[13px] appearance-none border border-[#8e8f8f] bg-gradient-to-br from-[#cfd3da] to-[#f8f8f8] shadow-[inset_0_0_0_1px_#f4f4f4]"
      />
      <svg viewBox="0 0 13 13" className="pointer-events-none absolute inset-0 hidden h-[13px] w-[13px] peer-checked:block">
        <path d="M3.500 6.500l2.300 3.200L9.800 3" fill="none" stroke="#20287c" strokeWidth="2" />
      </svg>
    </span>
  );
}

function SettingsForm() {
  const L = "col-start-2";
  const R = "col-start-5";
  return (
    <form className="ml-[4px] flex w-[544px] shrink-0 border border-black bg-gradient-to-b from-white via-[#e9eaee] to-[#d9dde2]">
      <div className="flex-1 pt-[8px] pb-[6px] pl-[13px]">
        <div className="grid auto-rows-[26px] grid-cols-[153px_125px_20px_81px_125px]">
          <Lab id="fsize" col="left" row="row-start-1">Field Size:</Lab>
          <Box id="fsize" value="0" place={`${L} row-start-1`} />
          <Lab id="wave" col="right" row="row-start-1">Wavelength:</Lab>
          <Pick id="wave" value="1" tall place={`${R} row-start-1`} />

          <Lab id="isize" col="left" row="row-start-2">Image Size:</Lab>
          <Box id="isize" value="2.5" place={`${L} row-start-2`} />
          <Lab id="field" col="right" row="row-start-2">Field:</Lab>
          <Pick id="field" value="1" tall place={`${R} row-start-2`} />

          <Lab id="file" col="left" row="row-start-3">File:</Lab>
          <Pick id="file" value="CIRCLE.IMA" place="col-span-4 col-start-2 row-start-3" />

          <Lab id="rot" col="left" row="row-start-4">Rotation:</Lab>
          <Box id="rot" value="0" place={`${L} row-start-4`} />
          <button type="button" className="col-span-2 col-start-4 row-start-4 h-[26px] rounded-[3px] border border-[#707070] bg-[linear-gradient(#f3f3f3,#e9e9e9_50%,#dcdcdc_50%,#cdcdcd)]">
            Edit IMA File
          </button>

          <Lab id="rays" col="left" row="row-start-5">Rays x 1000:</Lab>
          <Spinner id="rays" value="2000" place={`${L} row-start-5`} />
          <Lab id="surf" col="right" row="row-start-5">Surface:</Lab>
          <Pick id="surf" value="Image" tall place={`${R} row-start-5`} />

          <Lab id="show" col="left" row="row-start-6">Show:</Lab>
          <Pick id="show" value="False Color" place={`${L} row-start-6`} />

          <Lab id="src" col="left" row="row-start-7">Source:</Lab>
          <Pick id="src" value="Uniform" place={`${L} row-start-7`} />
          <Lab id="pix" col="right" row="row-start-7"># Pixels:</Lab>
          <Spinner id="pix" value="1000" place={`${R} row-start-7`} />

          <Lab id="na" col="right" row="row-start-8">NA</Lab>
          <Box id="na" value="0" place={`${R} row-start-8`} />

          <Lab id="pol" col="left" row="row-start-9">Use Polarization</Lab>
          <Tick id="pol" place={`${L} row-start-9`} />
          <Lab id="watts" col="right" row="row-start-9">Total Watts:</Lab>
          <Box id="watts" value="1" place={`${R} row-start-9`} />

          <Lab id="vig" col="left" row="row-start-10">Remove Vignetting Factors</Lab>
          <Tick id="vig" place={`${L} row-start-10`} />
          <Lab id="scale" col="right" row="row-start-10">Plot Scale:</Lab>
          <Box id="scale" value="0" place={`${R} row-start-10`} />

          <Lab id="scat" col="left" row="row-start-11">Scatter Rays</Lab>
          <Tick id="scat" place={`${L} row-start-11`} />
          <Lab id="par" col="right" row="row-start-11">Parity:</Lab>
          <Pick id="par" value="Even" place={`${R} row-start-11`} />

          <Lab id="del" col="left" row="row-start-12">Delete Vignetted</Lab>
          <Tick id="del" place={`${L} row-start-12`} />

          <Lab id="interp" col="left" row="row-start-13">Use Pixel Interpolation</Lab>
          <Tick id="interp" on place={`${L} row-start-13`} />
          <Lab id="ref" col="right" row="row-start-13">Reference:</Lab>
          <Pick id="ref" value="Chief Ray" place={`${R} row-start-13`} />

          <Lab id="bim" col="left" row="row-start-14">Save as BIM File:</Lab>
          <Box id="bim" value="" tall place="col-span-4 col-start-2 row-start-14 max-w-[300px]" />
        </div>
        <hr className="mt-[8px] mr-[8px] -ml-[5px] border-[#8fb3cc]" />
      </div>
      <div className="flex w-[17px] flex-col items-center bg-[#ededee] py-[7px]" aria-hidden="true">
        <svg viewBox="0 0 6 4" width="6" height="4"><path d="M0 4h6L3 0z" fill="#777" /></svg>
        <div className="mt-[6px] mb-[43px] flex w-[15px] flex-1 flex-col items-center justify-center gap-px rounded-[2px] border border-[#979797] bg-gradient-to-r from-[#f6f6f6] via-[#e2e2e4] to-[#bcbdc2]">
          <span className="h-[2px] w-[7px] bg-[#777]" /><span className="h-[2px] w-[7px] bg-[#777]" /><span className="h-[2px] w-[7px] bg-[#777]" />
        </div>
        <svg viewBox="0 0 6 4" width="6" height="4"><path d="M0 0h6L3 4z" fill="#777" /></svg>
      </div>
    </form>
  );
}

function Tabs({ last = false }: { last?: boolean }) {
  return (
    <div role="tablist" className={`flex shrink-0 flex-col border-b border-[#9a9ea6] bg-[#cbcdd2] text-[12px] ${last ? "h-[26px]" : "h-[28px]"}`}>
      <div className="h-[5px] shrink-0 border-b border-[#5f6b84] bg-[#dcdfe4]" />
      <div className="flex">
        <button type="button" role="tab" aria-selected="true" className="relative h-[19px] w-[79px] pl-[15px]">
          <svg viewBox="0 0 79 19" className="absolute inset-x-0 -top-px h-[20px] w-[79px]" preserveAspectRatio="none">
            <path d="M0 0H5C15 1 13 18.500 25 18.500H78.500V0z" fill="#dcdfe4" />
            <path d="M0 .5H5C15 1 13 18.500 25 18.500H78.500V0" fill="none" stroke="#5f6b84" />
          </svg>
          <span className="relative">Graph</span>
        </button>
        <button type="button" role="tab" aria-selected="false" className="h-[19px] w-[64px] rounded-bl-[5px] border-r border-b border-[#5f6b84] bg-gradient-to-b from-[#c3c8d0] to-[#a6acb8]">
          Text
        </button>
      </div>
    </div>
  );
}

const scaleLabels = ["6.3653", "5.7288", "5.0923", "4.4557", "3.8192", "3.1827", "2.5461", "1.9096", "1.2731", "0.6365", "0.0000"];

const caustics = [
  "M0 57C14 48 24 35 42 35S56 45 62 63",
  "M55 88C55 105 60 117 72 123S92 127 101 124L117 110L142 104L162 95",
  "M0 138C15 130 30 134 47 134L56 155",
  "M0 140C0 158 4 168 11 176C25 178 32 182 44 192",
  "M103 140C104 150 110 158 114 163L126 162",
  "M107 20L115 33", "M196 84C196 94 199 100 205 107", "M0 101L10 95", "M168 125L177 131",
];
const haze = [
  "M62 63L55 88", "M44 192C60 185 75 178 102 180L108 200", "M101 124L103 140", "M162 95C172 75 180 62 200 60",
  "M114 38L103 48L75 60M118 38L130 40", "M184 18L185 38M178 62L184 68", "M47 134L52 120L58 112", "M56 155L58 160",
  "M184 168L178 190", "M10 95L25 84L48 76", "M0 10L22 8M30 6L55 0", "M162 95L168 125L178 140L182 155", "M104 5L108 22",
];

function ImagePlot() {
  return (
    <svg viewBox="0 0 489 290" className="block h-[290px] w-[489px] shrink-0" role="img" aria-label="False color irradiance plot with scale">
      <defs>
        <linearGradient id="jet" x2="0" y2="1">
          <stop offset="0" stopColor="#b80000" />
          <stop offset=".1" stopColor="#f40000" />
          <stop offset=".16" stopColor="#f86000" />
          <stop offset=".22" stopColor="#f0a800" />
          <stop offset=".31" stopColor="#e0f000" />
          <stop offset=".4" stopColor="#b4ff00" />
          <stop offset=".6" stopColor="#40f800" />
          <stop offset=".7" stopColor="#00e070" />
          <stop offset=".82" stopColor="#00b0b8" />
          <stop offset=".92" stopColor="#0060e0" />
          <stop offset="1" stopColor="#2c08c0" />
        </linearGradient>
        <filter id="grain" x="0" y="0" width="100%" height="100%" colorInterpolationFilters="sRGB">
          <feTurbulence type="fractalNoise" baseFrequency="0.9" numOctaves="3" seed="4" />
          <feColorMatrix values="0 0 0 0 0.12  0 0 0 0 0.32  0 0 0 0 0.84  2.6 0 0 0 -0.95" />
        </filter>
        <filter id="speckle" x="-20%" y="-20%" width="140%" height="140%" colorInterpolationFilters="sRGB">
          <feGaussianBlur in="SourceGraphic" stdDeviation="4" result="b" />
          <feTurbulence type="fractalNoise" baseFrequency="0.9" numOctaves="3" seed="9" />
          <feColorMatrix values="0 0 0 0 0  0 0 0 0 0  0 0 0 0 0  4 0 0 0 -1.5" result="n" />
          <feComposite in="b" in2="n" operator="in" />
        </filter>
        <filter id="rough" x="-5%" y="-5%" width="110%" height="110%">
          <feTurbulence type="fractalNoise" baseFrequency="0.9" numOctaves="1" seed="2" result="n" />
          <feDisplacementMap in="SourceGraphic" in2="n" scale="2.500" xChannelSelector="R" yChannelSelector="G" />
        </filter>
        <clipPath id="frame"><rect width="205" height="205" /></clipPath>
      </defs>
      <rect x="67.500" y="18.500" width="256" height="256" fill="#2f0cc4" stroke="#241c70" />
      <g transform="translate(93 44)" clipPath="url(#frame)">
        <rect width="205" height="205" filter="url(#grain)" opacity=".75" />
        <g fill="none" stroke="#1a74dc" strokeWidth="6" opacity=".75" filter="url(#speckle)">
          {[...haze, ...caustics].map((d) => <path key={d} d={d} />)}
        </g>
        <g fill="none" stroke="#1488dc" strokeWidth="2.500" opacity=".35" filter="url(#rough)">
          {caustics.map((d) => <path key={d} d={d} />)}
        </g>
        <g fill="none" stroke="#12a4d4" strokeWidth="1.100" opacity=".8" filter="url(#rough)">
          {caustics.map((d) => <path key={d} d={d} />)}
        </g>
        <path d="M42 35C50 35 54 40 57 47M5 52L14 45M168 125L173 128" fill="none" stroke="#18c898" strokeWidth="1.200" opacity=".8" />
        <path d="M46 133h2v2h-2zM8 95h1.500v2H8zM169 126l3 1.500v1l-3-1.500zM113 162h2v1.500h-2z" fill="#50f060" />
      </g>
      <rect x="381.500" y="17.500" width="19" height="258" fill="url(#jet)" stroke="#555" strokeWidth=".5" />
      <g fontFamily="DejaVu Sans Mono, monospace" fontSize="9" fill="#000">
        {scaleLabels.map((t, i) => (
          <text key={t} x="432" y={22 + Math.round(i * 25.6)}>{t}</text>
        ))}
      </g>
    </svg>
  );
}

function ReportBox() {
  return (
    <div className="w-[490px] shrink-0 border border-[#444] font-['DejaVu_Sans_Mono',monospace] text-[9px] leading-[11px]">
      <div className="h-[12px] border-b border-[#444] text-center leading-[12px]">Image Diagram</div>
      <div className="flex h-[60px]">
        <div className="flex-1 pt-[11px] pl-[9px] text-[8px] leading-[8px] whitespace-pre">
          <p>5/23/2018</p>
          <p>Image Width = 2.5000 Millimeters, 1000 x 1000 pixels</p>
          <p>Field position:     0.0000 (deg)</p>
          <p>Percent efficiency: 45.181%, 4.518E-01 Watts</p>
          <p className="pt-[8px]">Surface: 7. Units are watts per Millimeters squared.</p>
        </div>
        <div className="w-[163px] border-l border-[#444] text-center">
          <div className="h-[39px] border-b border-[#444] pt-[3px]">
            <p className="text-[11px] leading-[14px]">Zemax</p>
            <p className="leading-[13px]">Zemax OpticStudio 17.5</p>
          </div>
          <p className="leading-[10px]">Basic DiffuserCam.zmx</p>
          <p className="leading-[10px]">Configuration 1 of 1</p>
        </div>
      </div>
    </div>
  );
}

function ImageAnalysis() {
  return (
    <section className="flex min-w-0 flex-1 flex-col overflow-hidden bg-white">
      <TitleBar
        closable={false}
        title="2: Geometric Image Analysis 1"
        icon={
          <svg viewBox="0 0 16 16" width="16" height="16">
            <path d="M4 15V2.500h9M4 8.500h7" fill="none" stroke="#5d5f4a" strokeWidth="2.300" />
          </svg>
        }
      />
      <AnalysisToolbar open />
      <SettingsForm />
      <Tabs />
      <AnalysisToolbar open={false} />
      <div className="flex min-h-0 flex-1 flex-col overflow-hidden pl-[4px]">
        <ImagePlot />
        <div className="min-h-0 flex-1" />
        <ReportBox />
      </div>
      <Tabs last />
    </section>
  );
}

/* ---------- page ---------- */

const status = ["EFFL: -8.82713", "WFNO: 1.63355", "ENPD: 2.82", "TOTR: 12.1"];

export default function App() {
  return (
    <div className="flex h-screen min-h-[900px] flex-col overflow-hidden bg-[#dfe1e5] font-['Noto_Sans',sans-serif] text-[11px] leading-[16px] text-[#111]">
      <main className="flex min-h-0 flex-1 border-t border-[#a2a5ab]">
        <div className="flex w-1/2 min-w-[823px] flex-col border-r-2 border-l border-[#a2a5ab]">
          <LensData />
          <ShadedModel />
        </div>
        <ImageAnalysis />
      </main>
      <footer className="flex h-[8px] shrink-0 items-end overflow-hidden bg-[#15357f] pl-[105px] leading-[12px] text-white">
        {status.map((s) => (
          <span key={s} className="w-[386px] shrink-0 border-l border-[#3c5aa4] pl-[5px]">{s}</span>
        ))}
      </footer>
      <div className="flex h-[3px] shrink-0 border-t border-[#6b7fa8] bg-[#c5d3e6]">
        {[0, 1, 2, 3, 4].map((n) => (
          <span key={n} className="w-[62px] rounded-t-[2px] border-x border-[#44546e] bg-[#e6ebf2]" />
        ))}
      </div>
    </div>
  );
}
